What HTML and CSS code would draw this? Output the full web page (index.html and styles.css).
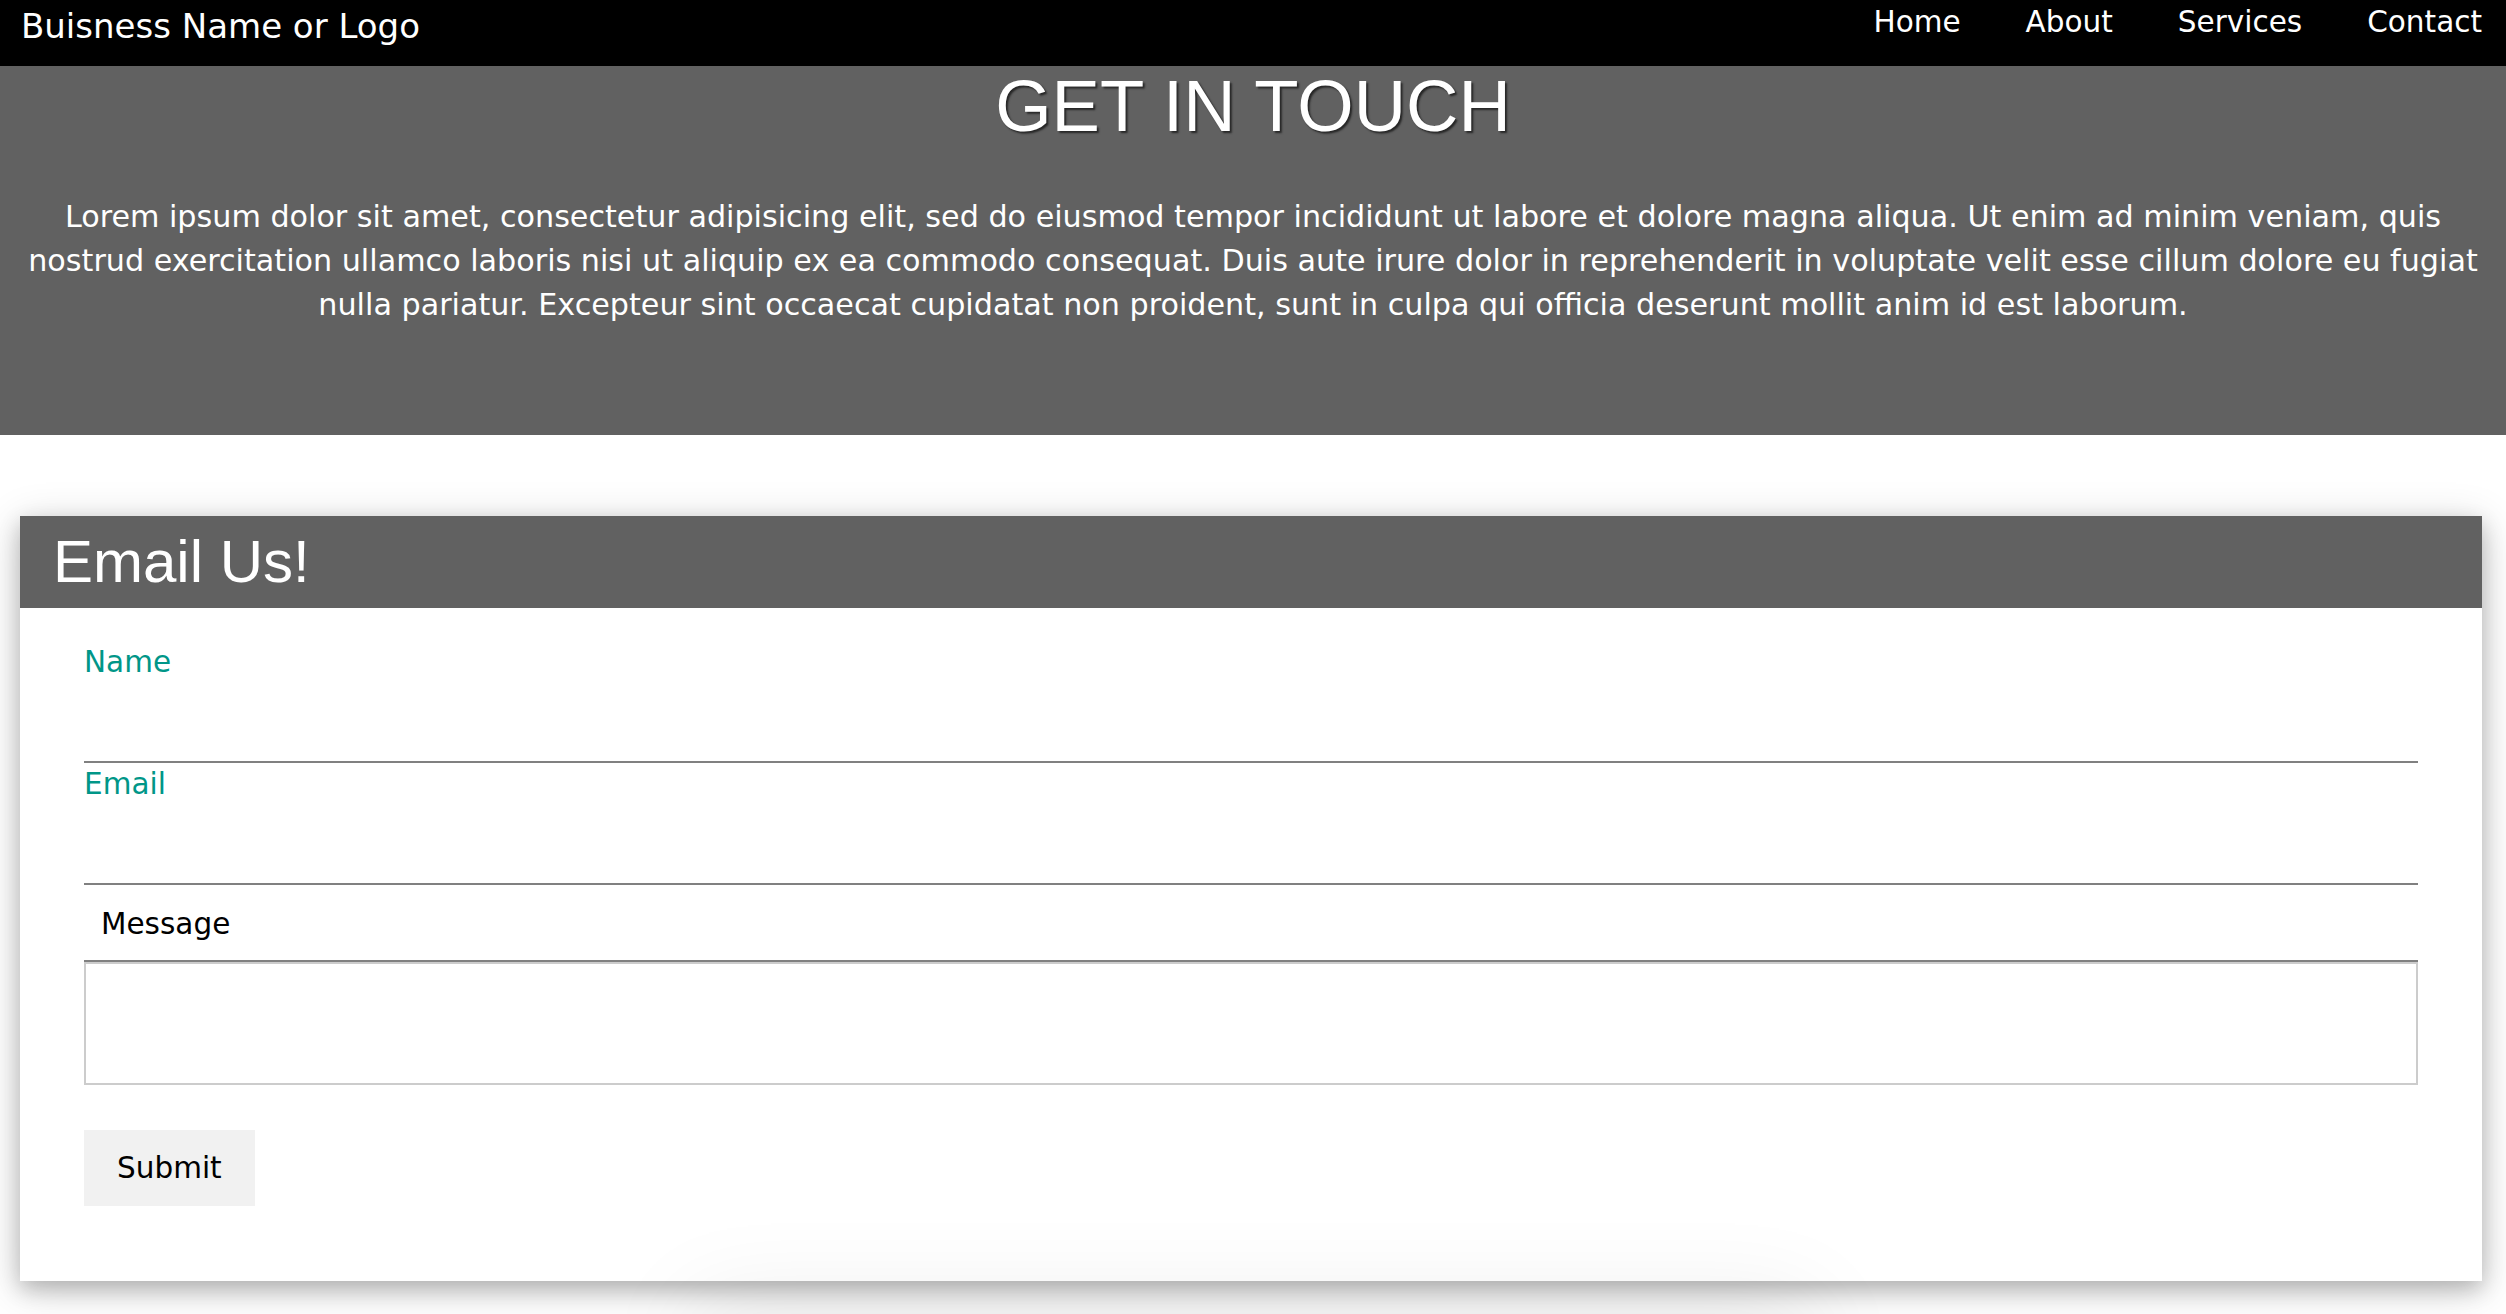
FILE: index.html
```html
<!DOCTYPE html>
<html lang="en">
<head>
<meta charset="utf-8">
<title>Contact</title>
<link rel="stylesheet" href="styles.css">
</head>
<body>
<header class="topbar">
  <div class="brand">Buisness Name or Logo</div>
  <nav class="menu">
    <a href="#">Home</a>
    <a href="#">About</a>
    <a href="#">Services</a>
    <a href="#">Contact</a>
  </nav>
</header>

<section class="hero">
  <h1 class="hero-title">GET IN TOUCH</h1>
  <p class="hero-text">Lorem ipsum dolor sit amet, consectetur adipisicing elit, sed do eiusmod tempor incididunt ut labore et dolore magna aliqua. Ut enim ad minim veniam, quis nostrud exercitation ullamco laboris nisi ut aliquip ex ea commodo consequat. Duis aute irure dolor in reprehenderit in voluptate velit esse cillum dolore eu fugiat nulla pariatur. Excepteur sint occaecat cupidatat non proident, sunt in culpa qui officia deserunt mollit anim id est laborum.</p>
</section>

<main class="card">
  <div class="card-head">
    <h2 class="card-title">Email Us!</h2>
  </div>
  <form class="card-body">
    <label class="field-label" for="name">Name</label>
    <input class="line-input" id="name" type="text">
    <label class="field-label" for="email">Email</label>
    <input class="line-input" id="email" type="email">
    <div class="msg-label">Message</div>
    <textarea class="msg-box"></textarea>
    <button class="submit-btn" type="button">Submit</button>
  </form>
</main>

<div class="below-card"></div>
</body>
</html>
```

FILE: styles.css
```css
html, body {
  margin: 0;
  padding: 0;
  background: #ffffff;
}

body {
  font-family: "DejaVu Sans", Verdana, sans-serif;
  font-size: 29.5px;
  color: #000;
  overflow: hidden;
}

.topbar {
  display: flex;
  justify-content: space-between;
  align-items: flex-start;
  height: 66px;
  background: #000;
  color: #fff;
}

.brand {
  padding: 6px 0 0 21px;
  font-size: 34px;
  line-height: 40px;
}

.menu {
  display: flex;
  gap: 65px;
  padding: 5px 24px 0 0;
}

.menu a {
  color: #fff;
  text-decoration: none;
  line-height: 35px;
}

.hero {
  background: #616161;
  color: #fff;
  height: 369px;
  padding: 3px 16px 0;
  box-sizing: border-box;
  text-align: center;
}

.hero-title {
  margin: 0;
  font-family: "Liberation Sans", Arial, sans-serif;
  font-weight: normal;
  font-size: 72.5px;
  line-height: 73px;
  text-shadow: 2px 2px 2px #262626;
}

.hero-text {
  margin: 53px 0 0;
  font-size: 30.2px;
  line-height: 44px;
}

.card {
  position: relative;
  margin: 81px 24px 0 20px;
  background: #fff;
  box-shadow: 0 8px 20px 0 rgba(0, 0, 0, 0.2), 0 8px 40px 0 rgba(0, 0, 0, 0.19);
}

.card-head {
  background: #616161;
  color: #fff;
  height: 92px;
  padding-left: 33px;
}

.card-title {
  margin: 0;
  font-family: "Liberation Sans", Arial, sans-serif;
  font-weight: normal;
  font-size: 60px;
  line-height: 92px;
}

.card-body {
  display: flex;
  flex-direction: column;
  align-items: flex-start;
  padding: 33px 64px 75px;
}

.field-label {
  display: block;
  padding-top: 3px;
  color: #009688;
  line-height: 36px;
}

.line-input {
  display: block;
  width: 100%;
  height: 83px;
  box-sizing: border-box;
  margin: 0;
  padding: 16px;
  border: none;
  border-bottom: 2px solid #808080;
  font: inherit;
  background: transparent;
  outline: none;
}

.msg-label {
  align-self: stretch;
  padding: 21px 17px 18px;
  line-height: 36px;
  border-bottom: 2px solid #808080;
}

.msg-box {
  display: block;
  width: 100%;
  height: 123px;
  box-sizing: border-box;
  margin: 0;
  border: 2px solid #cccccc;
  font: inherit;
  resize: none;
  outline: none;
}

.submit-btn {
  margin-top: 45px;
  height: 76px;
  padding: 0 33px;
  border: none;
  background: #f1f1f1;
  color: #000;
  font: inherit;
  line-height: 36px;
}

.below-card {
  position: relative;
  width: 1100px;
  height: 300px;
  margin: 40px auto 0;
  background: #ececec;
  box-shadow: 0 -10px 90px 10px rgba(0, 0, 0, 0.08);
}
```
